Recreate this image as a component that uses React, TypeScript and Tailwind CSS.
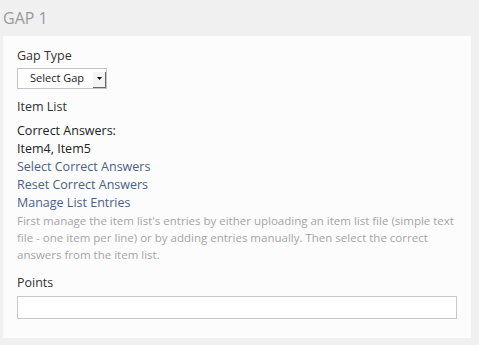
import React from 'react';

const App: React.FC = () => {
  return (
    <div className="w-[479px] h-[345px] bg-[#f0f0f0] font-['Open_Sans',sans-serif] overflow-hidden">
      {/* Heading */}
      <div className="h-[36px] pl-[3px] flex items-center">
        <h2 className="text-[16px] font-normal text-[#9a9a9a] leading-none -mt-[1px]">GAP 1</h2>
      </div>

      {/* Panel */}
      <div className="ml-[3px] w-[468px] h-[302px] bg-[#fcfcfc] pl-[14px] pr-[14px] pt-[11px]">
        <div className="text-[12.5px] leading-[18px] text-[#333]">Gap Type</div>
        <div className="mt-[3px] w-[90px] h-[21px] border border-[#c4c4c4] bg-white flex items-stretch">
          <span className="flex-1 flex items-center justify-center text-[11px] text-[#222] pl-[3px]">Select Gap</span>
          <span className="w-[13px] mt-[3px] flex items-center justify-center border-r-[1.5px] border-b-[1.5px] border-[#6a6a6a] bg-[#f4f4f4]">
            <svg width="5" height="3" viewBox="0 0 5 3" className="-mt-[3px]">
              <path d="M0 0 L5 0 L2.5 3 Z" fill="#111" />
            </svg>
          </span>
        </div>

        <div className="mt-[9px] text-[12.5px] leading-[18px] text-[#333]">Item List</div>

        <div className="mt-[6px] text-[12.5px] leading-[18px] text-[#222]">
          <p>Correct Answers:</p>
          <p>Item4, Item5</p>
          <p className="text-[#4a6186]">Select Correct Answers</p>
          <p className="text-[#4a6186]">Reset Correct Answers</p>
          <p className="text-[#4a6186]">Manage List Entries</p>
        </div>
        <p className="text-[11.5px] leading-[17px] text-[#a5a5a5]">
          First manage the item list's entries by either uploading an item list file (simple text file - one item per line) or by adding entries manually. Then select the correct answers from the item list.
        </p>

        <div className="mt-[11px] text-[12.5px] leading-[18px] text-[#333]">Points</div>
        <div className="mt-[4px] w-[440px] h-[23px] border border-[#c8c8c8] bg-white" />
      </div>
    </div>
  );
};

export default App;
